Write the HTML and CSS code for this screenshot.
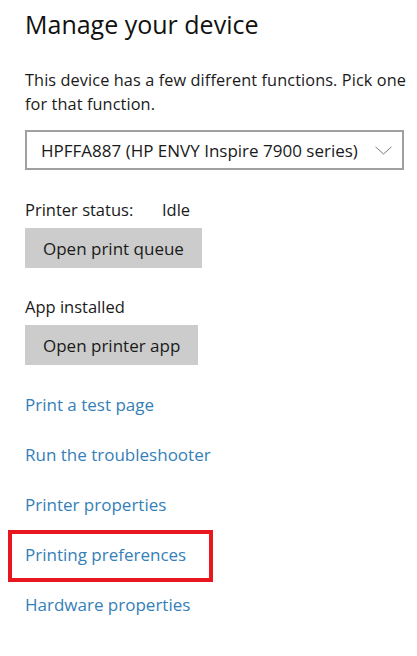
FILE: index.html
```html
<!DOCTYPE html>
<html lang="en">
<head>
    <meta charset="UTF-8">
    <meta name="viewport" content="width=device-width, initial-scale=1.0">
    <title>Manage your device</title>
    <link rel="stylesheet" href="styles.css">
</head>
<body>
    <div class="page">
        <h1>Manage your device</h1>

        <p class="intro">This device has a few different functions. Pick one<br>for that function.</p>

        <div class="select">
            <span class="select-text">HPFFA887 (HP ENVY Inspire 7900 series)</span>
            <svg class="chevron" width="17" height="9" viewBox="0 0 17 9">
                <path d="M0.5 0.8 L8.5 8 L16.5 0.8" fill="none" stroke="#7a7a7a" stroke-width="1"/>
            </svg>
        </div>

        <div class="status">
            <span class="status-label">Printer status:</span>
            <span>Idle</span>
        </div>
        <button class="btn">Open print queue</button>

        <div class="label">App installed</div>
        <button class="btn">Open printer app</button>

        <ul class="links">
            <li><a href="#">Print a test page</a></li>
            <li><a href="#">Run the troubleshooter</a></li>
            <li><a href="#">Printer properties</a></li>
            <li class="marked"><a href="#">Printing preferences</a></li>
            <li><a href="#">Hardware properties</a></li>
        </ul>
    </div>
</body>
</html>
```

FILE: styles.css
```css
body {
    margin: 0;
    background: #fff;
    color: #1a1a1a;
    font-family: "Open Sans", "Noto Sans", sans-serif;
    font-size: 16.5px;
    overflow: hidden;
}
.page {
    padding: 6px 0 0 25px;
}
h1 {
    margin: 0;
    font-size: 25px;
    font-weight: 400;
    line-height: 36px;
    color: #111;
}
.intro {
    margin: 26px 0 0;
    line-height: 24px;
    font-size: 16.3px;
    letter-spacing: 0.1px;
    white-space: nowrap;
}
.select {
    display: flex;
    align-items: center;
    justify-content: space-between;
    box-sizing: border-box;
    width: 379px;
    height: 40px;
    margin-top: 14px;
    padding: 0 10px 0 14px;
    border: 2px solid #a0a0a0;
    font-size: 17px;
}
.chevron {
    display: block;
}
.status {
    display: flex;
    margin-top: 28px;
    line-height: 24px;
}
.status-label {
    width: 137px;
}
.btn {
    display: block;
    height: 40px;
    margin-top: 6px;
    padding: 0 18px;
    border: none;
    background: #cccccc;
    color: #1a1a1a;
    font-family: inherit;
    font-size: 17px;
}
.label {
    margin-top: 27px;
    line-height: 24px;
}
.links {
    list-style: none;
    margin: 28px 0 0;
    padding: 0;
}
.links li {
    line-height: 24px;
    margin-bottom: 26px;
}
.links a {
    color: #3580b8;
    text-decoration: none;
    font-size: 17px;
}
.links .marked {
    position: relative;
}
.links .marked::before {
    content: "";
    position: absolute;
    left: -17px;
    top: -13px;
    width: 197px;
    height: 44px;
    border: 4px solid #e8161f;
}
```
